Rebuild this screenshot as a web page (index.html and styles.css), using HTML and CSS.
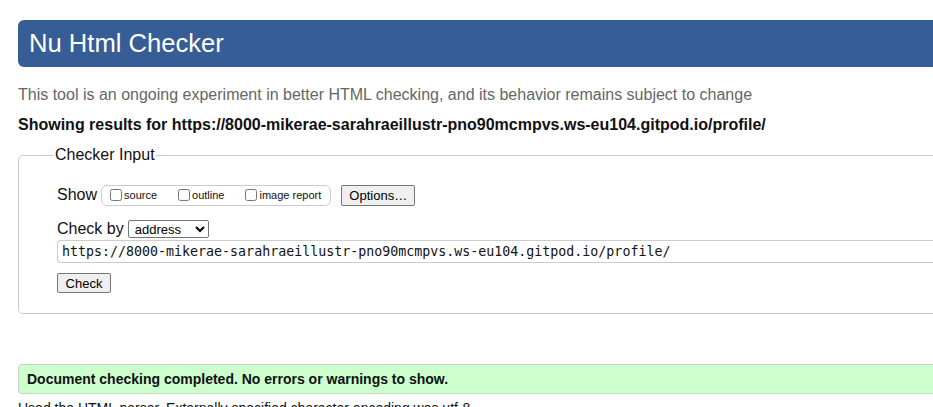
FILE: index.html
```html
<!DOCTYPE html>
<html lang="en">
<head>
<meta charset="utf-8">
<title>Nu Html Checker</title>
<link rel="stylesheet" href="styles.css">
</head>
<body>
<div class="page">
  <h1 class="banner">Nu Html Checker</h1>
  <p class="intro">This tool is an ongoing experiment in better HTML checking, and its behavior remains subject to change</p>
  <p class="showing">Showing results for https://8000-mikerae-sarahraeillustr-pno90mcmpvs.ws-eu104.gitpod.io/profile/</p>
  <fieldset class="checker">
    <legend class="checker-legend">Checker Input</legend>
    <div class="row">
      <span class="lbl">Show</span>
      <fieldset class="show-group">
        <label class="opt"><input type="checkbox" class="cb">source</label>
        <label class="opt"><input type="checkbox" class="cb">outline</label>
        <label class="opt"><input type="checkbox" class="cb">image report</label>
      </fieldset>
      <button class="btn btn-options" type="button">Options…</button>
    </div>
    <div class="row row-by">
      <span class="lbl">Check by</span>
      <select class="sel"><option>address</option></select>
    </div>
    <input class="url" type="text" value="https://8000-mikerae-sarahraeillustr-pno90mcmpvs.ws-eu104.gitpod.io/profile/">
    <div class="row-check"><button class="btn btn-check" type="button">Check</button></div>
  </fieldset>
  <p class="success">Document checking completed. No errors or warnings to show.</p>
  <p class="details">Used the HTML parser. Externally specified character encoding was utf-8.</p>
</div>
</body>
</html>
```
FILE: styles.css
```css
html, body {
  margin: 0;
  padding: 0;
  overflow: hidden;
}
body {
  font-family: "Liberation Sans", Arial, sans-serif;
  font-size: 16px;
  color: #111;
  background: #fff;
}
.page {
  width: 960px;
  padding: 20px 0 0 18px;
}
.banner {
  margin: 0;
  height: 47px;
  box-sizing: border-box;
  padding: 8px 12px 0 11px;
  background: #365d95;
  color: #fff;
  font-weight: normal;
  font-size: 25.6px;
  line-height: 31px;
  border-radius: 6px 0 0 6px;
}
.intro {
  margin: 18px 0 0;
  color: #666;
  font-size: 16px;
  line-height: 20px;
}
.showing {
  margin: 10px 0 0;
  font-weight: bold;
  font-size: 16px;
  line-height: 20px;
}
.checker {
  margin: 11px 0 0;
  padding: 20px 0 20px 38px;
  border: 1px solid #ccc;
  border-radius: 5px;
  box-sizing: border-box;
}
.checker-legend {
  margin-left: -3px;
  padding: 0 1px;
  font-size: 16px;
}
.row {
  display: flex;
  align-items: center;
  height: 22px;
}
.lbl {
  font-size: 16px;
  margin-right: 4px;
}
.show-group {
  display: flex;
  align-items: center;
  margin: 0;
  padding: 0 9px 0 8px;
  height: 21px;
  box-sizing: border-box;
  border: 1px solid #ccc;
  border-radius: 6px;
  gap: 21px;
}
.opt {
  display: flex;
  align-items: center;
  font-size: 11px;
}
.cb {
  margin: 0 2px 0 0;
  width: 12px;
  height: 12px;
}
.btn {
  font-family: "Liberation Sans", Arial, sans-serif;
  background: #efefef;
  border: 1px solid #767676;
  border-radius: 2px;
  color: #000;
  padding: 0 6px;
}
.btn-options {
  margin-left: 10px;
  font-size: 13px;
  height: 21px;
  width: 74px;
}
.row-by {
  margin-top: 12px;
}
.sel {
  font-family: "Liberation Sans", Arial, sans-serif;
  font-size: 13px;
  width: 81px;
  height: 18px;
  padding: 0 2px;
  border: 1px solid #767676;
  border-radius: 2px;
  background: #fff;
  color: #000;
}
.url {
  display: block;
  margin: 0;
  width: 900px;
  height: 23px;
  box-sizing: border-box;
  padding: 0 4px;
  font-family: "DejaVu Sans Mono", Menlo, monospace;
  font-size: 13.3px;
  border: 1px solid #ccc;
  border-right: 0;
  border-radius: 4px 0 0 4px;
  color: #111;
}
.row-check {
  margin-top: 10px;
}
.btn-check {
  font-size: 13px;
  height: 20px;
  width: 54px;
  padding: 0;
}
.success {
  margin: 50px 0 0;
  height: 30px;
  box-sizing: border-box;
  padding: 0 8px;
  background: #ccffcc;
  border: 1px solid #ccc;
  border-radius: 4px 0 0 4px;
  font-weight: bold;
  font-size: 14px;
  line-height: 28px;
}
.details {
  margin: 6px 0 0;
  font-size: 14px;
  line-height: 16px;
  color: #111;
}
```
